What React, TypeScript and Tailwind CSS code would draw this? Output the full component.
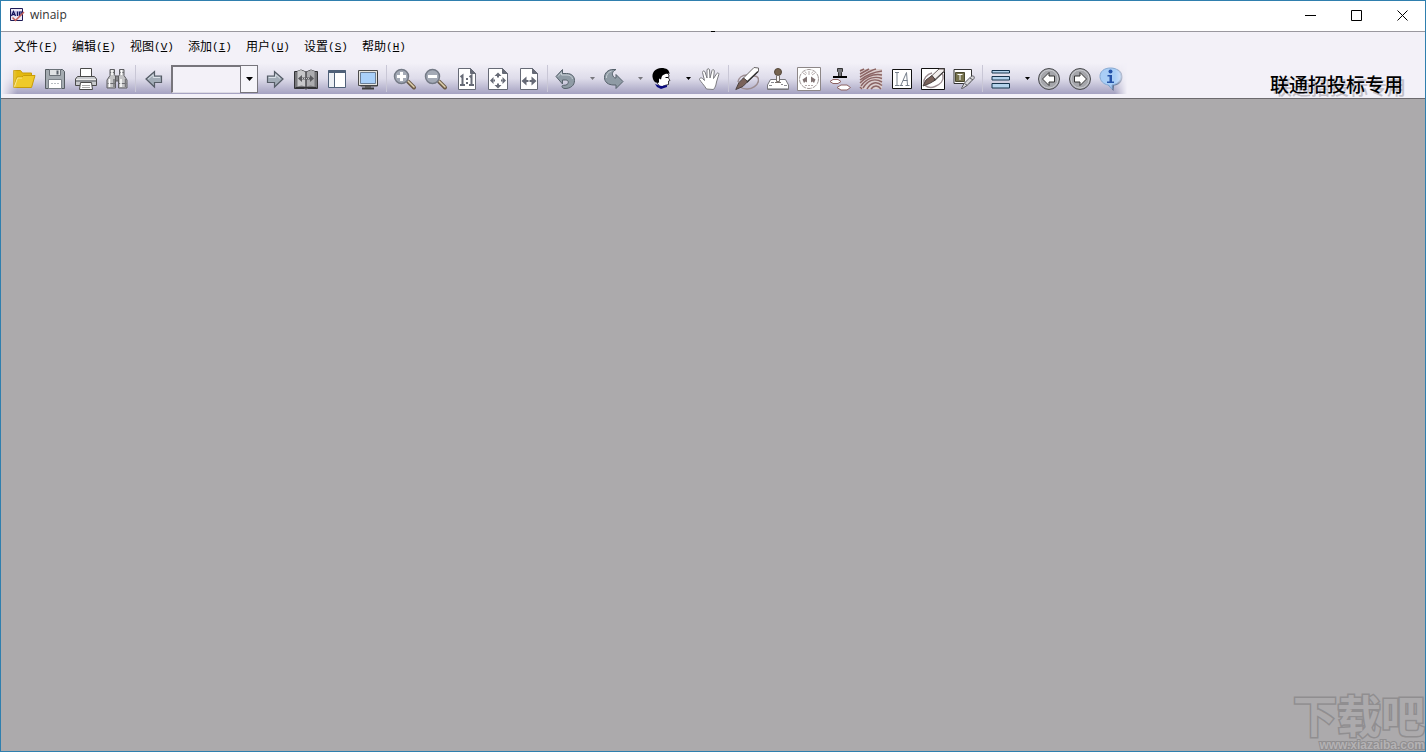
import React from 'react';

interface IconProps {
  children: React.ReactNode;
}

const Icon: React.FC<IconProps> = ({ children }) => (
  <svg className="w-6 h-6" viewBox="0 0 24 24" fill="none">
    {children}
  </svg>
);

const OpenIcon = () => (
  <Icon>
    <path d="M1.5 20V3.5h7l2 2.5h9v4" fill="#e3b90f" stroke="#c89c0a" />
    <path d="M1.5 20.5L5 10h5l1.5-1.5H23L19.5 20.5z" fill="#efca2b" stroke="#c89c0a" />
    <path d="M2.500 19.500L5.500 11H10" stroke="#fbe98a" />
  </Icon>
);

const SaveIcon = () => (
  <Icon>
    <path d="M2.5 2.5h17l2 2v17h-19z" fill="#a4abb1" stroke="#555c62" />
    <path d="M6.5 2.5h11v6h-11z" fill="#dfe2e4" stroke="#6a7178" />
    <path d="M13.5 3.5h2v4h-2z" fill="#59616a" />
    <path d="M5.5 12.5h13v9h-13z" fill="#fff" stroke="#7a8188" />
    <path d="M8 16.5h8" stroke="#b9bec3" strokeDasharray="2 1" />
  </Icon>
);

const PrintIcon = () => (
  <Icon>
    <path d="M6.5 10V1.5h11V10" fill="#fff" stroke="#4a4a4a" />
    <path d="M3.5 9.5h17l2 2.5v6.5h-21V12z" fill="#c9cbce" stroke="#4a4a4a" />
    <path d="M2 12h20v3H2z" fill="#8c8f93" />
    <path d="M2 12.5h20" stroke="#eee" />
    <path d="M6.5 15.5h11l1 7h-13z" fill="#fff" stroke="#4a4a4a" />
    <path d="M8 18.5h8M8 20.5h8" stroke="#aaa" />
  </Icon>
);

const FindIcon = () => (
  <Icon>
    <path d="M5 2.5h4.500v5l1 2v11.500H2v-8l3-4.500z" fill="#c4c4c6" stroke="#5c5c60" />
    <path d="M14.500 2.500H19v6l3 4.500v8h-8.500V9.500l1-2z" fill="#c4c4c6" stroke="#5c5c60" />
    <path d="M10.500 9h3v5h-3z" fill="#8a8a8e" stroke="#5c5c60" />
    <path d="M5 5.500h4.500M14.500 5.500H19M2.500 16.500h8M13.500 16.500h8" stroke="#6c6c70" />
    <path d="M4.500 12v8M16 12v8M7 3v5M16.500 3v5" stroke="#fff" strokeWidth="1.500" />
    <path d="M9 12v8M20.500 12v8" stroke="#77777b" strokeWidth="1.500" />
  </Icon>
);

const PrevIcon = () => (
  <Icon>
    <path d="M4 12l8.500-7.500V9h7v6.500h-7V20z" fill="#a3adb8" stroke="#555c66" strokeWidth="1.200" />
    <path d="M6.200 12l5-4.300v2.800h6.800" stroke="#dce2e8" />
  </Icon>
);

const NextIcon = () => (
  <Icon>
    <path d="M20 12l-8.500-7.500V9h-7v6.500h7V20z" fill="#a3adb8" stroke="#555c66" strokeWidth="1.200" />
    <path d="M5.700 10.500h7v-3l4.500 4" stroke="#dce2e8" />
  </Icon>
);

const BookIcon = () => (
  <Icon>
    <path d="M.5 4.500H3l4-1.500 5 2 5-2 4 1.500h2.500v17h-10L12 22l-1.500-.5H.5z" fill="#77777a" stroke="#333336" />
    <path d="M3.500 4L7 3l4.500 2v14.500l-4-1-4 1z" fill="#c8c8ca" />
    <path d="M20.500 4L17 3l-4.500 2v14.500l4-1 4 1z" fill="#acacaf" />
    <path d="M12 5v15M1.500 20.500h21" stroke="#333336" />
    <path d="M4 11.500L8 8v2.500h8V8l4 3.500-4 3.500v-2.500H8V15z" fill="#5a5a5e" />
    <path d="M8 11.500h8" stroke="#c4c4c6" strokeDasharray="1 1" />
  </Icon>
);

const SidebarIcon = () => (
  <Icon>
    <path d="M3.500 3.500h17v17h-17z" fill="#fff" stroke="#4f6078" />
    <path d="M3.500 4.500h17" stroke="#4f6078" strokeWidth="3" />
    <path d="M9.500 4v16" stroke="#4f6078" />
    <path d="M4 6h5v14H4z" fill="#eceff4" />
  </Icon>
);

const ScreenIcon = () => (
  <Icon>
    <path d="M2.500 3.500h19v15h-19z" fill="#e5e4df" stroke="#4c4c4c" />
    <path d="M4.500 5.500h15v11h-15z" fill="#a9d0fa" stroke="#6b7f98" />
    <path d="M9 19h6v2H9z" fill="#777" />
    <path d="M6 21.500h12" stroke="#3c3c3c" strokeWidth="2" />
    <path d="M21.500 5v14h-17" stroke="#3c3c3c" />
  </Icon>
);

const ZoomLens: React.FC<{ plus?: boolean }> = ({ plus }) => (
  <Icon>
    <path d="M15 14.500l6 6" stroke="#6b5a48" strokeWidth="4" strokeLinecap="round" />
    <path d="M15 14l6 6" stroke="#e0d2ae" strokeWidth="1.500" strokeLinecap="round" />
    <circle cx="8.500" cy="9.500" r="7" fill="#a4aab6" stroke="#747a86" strokeWidth="1.500" />
    <path d="M4 9.500h9" stroke="#fff" strokeWidth="3" />
    {plus && <path d="M8.500 5v9" stroke="#fff" strokeWidth="3" />}
  </Icon>
);

const Sheet = () => (
  <>
    <path d="M2.500 1.500h14l5 5v16h-19z" fill="#fff" stroke="#666a76" />
    <path d="M16.500 1.500v5h5z" fill="#666a76" stroke="#666a76" />
  </>
);

const ActualSizeIcon = () => (
  <Icon>
    <path d="M3.500 1.500h12l5 5v16h-17z" fill="#fff" stroke="#666a76" />
    <path d="M15.500 1.500v5h5z" fill="#666a76" stroke="#666a76" />
    <path d="M5.500 10l2-1.500v9M5 18h5M14.500 10l2-1.500v9M14 18h5" stroke="#666a76" strokeWidth="2" />
    <path d="M11 11h2v2h-2zM11 15h2v2h-2z" fill="#666a76" />
  </Icon>
);

const FitPageIcon = () => (
  <Icon>
    <Sheet />
    <path
      d="M12 5.500L15.500 9h-7zM12 21.500L15.500 18h-7zM4 13.500L7.500 10v7zM20 13.500L16.500 10v7z"
      fill="#666a76"
    />
    <path d="M11 9h2v1.500h-2zM11 16.500h2V18h-2zM7.500 12.500H9v2H7.500zM15 12.500h1.500v2H15z" fill="#666a76" />
  </Icon>
);

const FitWidthIcon = () => (
  <Icon>
    <path d="M3.500 1.500h12l5 5v16h-17z" fill="#fff" stroke="#666a76" />
    <path d="M15.500 1.500v5h5z" fill="#666a76" stroke="#666a76" />
    <path d="M4.500 14L9.500 9.500V13h5V9.500l5 4.500-5 4.500V15h-5v3.500z" fill="#666a76" />
    <path d="M11.500 12.500h1v3h-1z" fill="#fff" />
  </Icon>
);

const UndoIcon = () => (
  <Icon>
    <path
      d="M2 9.500L8.500 2.500v4h4c5.500 0 8 3 8 7 0 5-4 8-9.500 8-1.500 0-3-.8-3-2 0-.8.5-1.200 1.500-1.200 3 0 4.800-1 4.800-3 0-1.500-1-2.300-3-2.300H8.500v4z"
      fill="#8f9ba5"
      stroke="#56616b"
    />
    <path d="M4 9.500l3.500-4v2.500H13c3 0 5 1.500 5.500 4" stroke="#c6ced4" />
  </Icon>
);

const RedoIcon = () => (
  <Icon>
    <path
      d="M21 14.500L14 21.500V18h-2C6 18 2.500 15 2.500 10.500S6 2.500 11 2.500h3c-3 1.500-4.500 4-3 6.500.8 1.500 1.500 2 3 2V7.500z"
      fill="#8f9ba5"
      stroke="#56616b"
    />
    <path d="M9.500 4.200C6 5 4.200 8 4.500 11" stroke="#c6ced4" />
  </Icon>
);

const UserIcon = () => (
  <Icon>
    <path d="M8 9l9-3 2 2-.5 3 1.500 2.500-1.500.5v3.500l-4 1-4 2-3-4z" fill="#fff" stroke="#111" strokeWidth=".8" />
    <path d="M3 12c-2-6 2-11 8.500-11 5 0 8 2 8 6-3-1-5 0-6.500 1-1.500 1-1.500 3-2 4.500l-2-1v4c-3 1-5-.5-6-3.500z" fill="#000" />
    <path d="M5 17l4 1.500 3 .5 5-1v2l-3 1-3 1-4-2z" fill="#0a0a80" />
    <path d="M15.500 10.500H18" stroke="#000" />
  </Icon>
);

const HandIcon = () => (
  <Icon>
    <path
      d="M8.500 22C6 18 3 15 1.500 12.500c0-2 2-2 3-1l2 2L4.500 5.500c0-2 2-2 2.500-.5l2 6V3c.3-1.800 2.200-1.800 2.500 0l.5 8 2-7.500c.5-1.500 2.300-1 2.300.5L15.500 11.500l3.300-5c1-1.200 2.500-.3 2 1L18.500 15c-.5 3-1 5-3 7.500z"
      fill="#fff"
      stroke="#7b7b80"
    />
  </Icon>
);

const PenIcon = () => (
  <Icon>
    <path d="M16 9.500c5-1.500 8 .5 7.500 4.500-.8 4-6 8.500-12 8-3 0-5-1-6.500-2" stroke="#9c8d91" strokeWidth="1.500" />
    <path d="M12 8C7 8 3.500 11 3 15" stroke="#9c8d91" strokeWidth="1.500" />
    <path d="M19 .5l-11 11 4 4L23.500 4.500V1z" fill="#fff" stroke="#6a6667" />
    <path d="M8.500 11L4 15.500.8 22.500l7-3 5-5z" fill="#7a625a" stroke="#49403e" />
    <path d="M23 4.500L12 15" stroke="#333" strokeWidth="1.500" />
  </Icon>
);

const StampIcon = () => (
  <Icon>
    <circle cx="12" cy="5" r="3.500" fill="#75634f" stroke="#55483c" />
    <path d="M4.500 12.500h15l3 5.500v4.500h-21V18z" fill="#fff" stroke="#77777c" />
    <path d="M10.500 8.500h3v6h-3z" fill="#f4f2f2" stroke="#77706c" />
    <path d="M9 15.500h6" stroke="#77706c" />
    <path d="M5 15.500h3M3 18.500h3M18 18.500h3M15 17.500h2" stroke="#8a8a90" />
    <path d="M2 21.500h20" stroke="#aeaeb4" />
  </Icon>
);

const SealIcon = () => (
  <Icon>
    <path d="M.5.5h23v23H.5z" fill="#fff" stroke="#8d8787" />
    <circle cx="12" cy="12" r="9.500" stroke="#a09797" strokeDasharray="5 1" />
    <path d="M12 4v4M6 6l3 2M18 6l-3 2M8 4.500l1.500 2M16 4.500l-1.500 2" stroke="#b5abab" />
    <path d="M5.500 12.500L10 9.500v6l-1.500-1L7 16zM18.500 12.500L14 9.500v6l1.500-1L17 16z" fill="#807272" />
    <path d="M8 18.500h8" stroke="#b5abab" strokeDasharray="2 1" />
  </Icon>
);

const MultiStampIcon = () => (
  <Icon>
    <path d="M9.500 1.500h5v3l-1 1v4h-3v-4l-1-1z" fill="#77777c" stroke="#333" />
    <path d="M5 10h14" stroke="#000" strokeWidth="2" />
    <path d="M2 14.500l3-2h5l3 2-3 2H5zM9 20.500l4-2.500h6l3.500 2.500L19 23h-6z" fill="#fff" stroke="#8e6464" />
  </Icon>
);

const FingerprintIcon = () => (
  <Icon>
    <path d="M1 2h22v20H1z" fill="#dccfcf" />
    <path
      d="M1 4l4-2M1 7l9-5M1 10C8 6 12 3 17 2M1 13C9 7 15 5 23 4M1 16C8 9 15 6.500 23 8M2 19C8 11 16 9 23 11.500M4 21c5-8 12-10 19-6M8 22c4-7 10-8 15-3.500M12 22c3-4 7-4 10 0M1 20l2 2"
      stroke="#8b6464"
      strokeWidth="1.500"
    />
  </Icon>
);

const TextFieldIcon = () => (
  <Icon>
    <path d="M2.500 2.500h19v19h-19z" fill="#fff" stroke="#111" />
    <path d="M5 5.500h4M7 5.500v13M5 18.500h4M9.500 18.500H13M15.500 18.500h4M11 18l5.500-12.500M16.500 5.500l1 12.500M13 13.500h4.500" stroke="#77808c" />
  </Icon>
);

const SignatureIcon = () => (
  <Icon>
    <path d="M.5 1.500h23v21H.5z" fill="#fff" stroke="#111" />
    <path d="M11 6C6 7 2 12 3 16s6 5.500 11 3.500 9-6 8-11c-.5-2-2-3-4-2.500" stroke="#9c8d91" strokeWidth="1.500" />
    <path d="M18 2l-7.500 7 4 4L23 5V2z" fill="#f3efee" stroke="#6a6060" />
    <path d="M11 8.500l-6 4.500L2 19l6.500-2.500 6-3.500z" fill="#7a625a" stroke="#49403e" />
    <path d="M22.500 4.500L13 13.500" stroke="#333" />
  </Icon>
);

const NoteIcon = () => (
  <Icon>
    <path d="M2 2.500h17.500V13L17 16.500H2z" fill="#fff" stroke="#333" />
    <path d="M3.500 5.500h9v9h-9z" fill="#77734d" stroke="#4b4930" />
    <path d="M5.500 7.500h5M8 7.500V13" stroke="#fff" />
    <path d="M9.500 21.500l2.500-5 7-7c2-1.500 4 0 3 2l-7 7-4.500 3z" fill="#d7d7da" stroke="#5a5a60" />
    <path d="M12.500 16.500l3 2M18 11l3 2" stroke="#5a5a60" />
  </Icon>
);

const LinesIcon = () => (
  <Icon>
    <path d="M3 3.500h17.500V6H3zM3 9.500h17.500V13H3zM3 16.500h17.500V21H3z" fill="#b5d3ec" stroke="#17344c" />
  </Icon>
);

const CircleArrowIcon: React.FC<{ right?: boolean }> = ({ right }) => (
  <Icon>
    <circle cx="12" cy="12" r="10.500" fill="#a5a6ab" stroke="#4b4c50" />
    <circle cx="12" cy="12" r="9" stroke="#c9cacf" />
    {right ? (
      <path d="M18.500 12L12 5.500V9H6.500v6H12v3.500z" fill="#fff" stroke="#333" />
    ) : (
      <path d="M5.500 12L12 5.500V9h5.500v6H12v3.500z" fill="#fff" stroke="#333" />
    )}
  </Icon>
);

const InfoIcon = () => (
  <Icon>
    <path d="M13 1.500c7 0 10.500 3.500 10.500 8.500s-3.500 8-8.500 8.500L14.500 24 9 18z" fill="#5c6f90" />
    <path d="M11.500 1C5 1 1 4.500 1 9.500c0 4 3.500 8 8.500 8.500l3.500 4v-4c5-.5 9-4 9-8.500C22 4.500 18 1 11.500 1z" fill="#a9cef6" stroke="#86a9d2" />
    <circle cx="11.500" cy="4.500" r="2" fill="#2452a8" />
    <path d="M8.500 8H13v6.500h2V16H8v-1.500h2.500v-5h-2z" fill="#2452a8" />
  </Icon>
);

const AppIcon = () => (
  <svg className="w-4 h-4" viewBox="0 0 16 16" fill="none">
    <path d="M1.500 1.500h12v12h-12z" fill="#eeeaf8" stroke="#1d1a55" />
    <path d="M2 4h11v5H2z" fill="#c6c3e8" />
    <path d="M2.500 9l2-4.500L6.500 9M3.500 7.500h2M8.500 4.500V9M10.500 9V5H13v2h-2" stroke="#17155c" strokeWidth="1.200" />
    <path d="M3.500 10.500l3 3L15 5" stroke="#c5605a" strokeWidth="1.500" />
  </svg>
);

const ToolButton: React.FC<{ label: string; children: React.ReactNode }> = ({ label, children }) => (
  <button aria-label={label} title={label} className="w-[31px] h-[30px] shrink-0 flex items-center justify-center">
    {children}
  </button>
);

const Separator = () => (
  <div className="w-1.5 shrink-0 flex justify-center self-stretch py-0.5">
    <div className="w-px bg-[#c9c7d6]"></div>
  </div>
);

const DropArrow: React.FC<{ label: string; active?: boolean }> = ({ label, active }) => (
  <button aria-label={label} className="w-[17px] h-[30px] pl-1.5 shrink-0 flex items-center justify-center">
    <svg className={`w-[5px] h-[3px] ${active ? 'text-black' : 'text-[#77777d]'}`} viewBox="0 0 5 3" fill="currentColor">
      <path d="M0 0h5L2.500 3z" />
    </svg>
  </button>
);

const menus = [
  { name: '文件', hotkey: 'F' },
  { name: '编辑', hotkey: 'E' },
  { name: '视图', hotkey: 'V' },
  { name: '添加', hotkey: 'I' },
  { name: '用户', hotkey: 'U' },
  { name: '设置', hotkey: 'S' },
  { name: '帮助', hotkey: 'H' },
];

const TitleBar = () => (
  <header className="h-[30px] pb-0.5 bg-white flex items-center justify-between pl-2">
    <div className="flex items-center gap-[5px]">
      <AppIcon />
      <h1 className="text-xs text-[#333] font-['Open_Sans','Noto_Sans',sans-serif]">winaip</h1>
    </div>
    <div className="flex h-full">
      <button aria-label="最小化" className="w-[46px] flex items-center justify-center">
        <svg className="w-[11px] h-[11px]" viewBox="0 0 11 11" stroke="#000">
          <path d="M0 5.500h11" />
        </svg>
      </button>
      <button aria-label="最大化" className="w-[46px] flex items-center justify-center">
        <svg className="w-[11px] h-[11px]" viewBox="0 0 11 11" fill="none" stroke="#000">
          <path d="M.5.5h10v10H.5z" />
        </svg>
      </button>
      <button aria-label="关闭" className="w-[46px] flex items-center justify-center">
        <svg className="w-[11px] h-[11px]" viewBox="0 0 11 11" stroke="#000">
          <path d="M.5.5l10 10M10.500.5l-10 10" />
        </svg>
      </button>
    </div>
  </header>
);

const MenuBar = () => (
  <nav className="h-[31px] pb-px pl-1.5 flex items-center">
    {menus.map((menu) => (
      <button key={menu.name} className="w-[58px] h-6 flex items-center justify-center text-xs text-black whitespace-nowrap">
        {menu.name}
        <span className="text-[11px] font-['Liberation_Mono',monospace]">
          (<span className="underline">{menu.hotkey}</span>)
        </span>
      </button>
    ))}
  </nav>
);

const PageBox = () => (
  <div className="w-[87px] h-7 ml-0.5 mr-px shrink-0 flex">
    <input
      type="text"
      aria-label="页码"
      className="w-[69px] h-full px-1 text-xs bg-[#f3f1f8] border-t-2 border-l-2 border-b border-[#77757c] border-b-[#dddbe4] outline-none"
    />
    <button aria-label="选择页码" className="w-[18px] h-full flex items-center justify-center bg-[#f6f5fa] border border-[#77757c]">
      <svg className="w-[7px] h-1" viewBox="0 0 7 4">
        <path d="M0 0h7L3.500 4z" />
      </svg>
    </button>
  </div>
);

const Toolbar = () => (
  <div className="h-[31px] pl-[7px] pr-px flex items-center shrink-0 bg-linear-to-b from-[#f3f1f8] via-[#dedcea] to-[#a5a2c1] [mask-image:linear-gradient(to_right,transparent,black_16px,black_calc(100%-12px),transparent)]">
    <ToolButton label="打开"><OpenIcon /></ToolButton>
    <ToolButton label="保存"><SaveIcon /></ToolButton>
    <ToolButton label="打印"><PrintIcon /></ToolButton>
    <ToolButton label="查找"><FindIcon /></ToolButton>
    <Separator />
    <ToolButton label="上一页"><PrevIcon /></ToolButton>
    <PageBox />
    <ToolButton label="下一页"><NextIcon /></ToolButton>
    <ToolButton label="双页"><BookIcon /></ToolButton>
    <ToolButton label="侧栏"><SidebarIcon /></ToolButton>
    <ToolButton label="全屏"><ScreenIcon /></ToolButton>
    <Separator />
    <ToolButton label="放大"><ZoomLens plus /></ToolButton>
    <ToolButton label="缩小"><ZoomLens /></ToolButton>
    <ToolButton label="实际大小"><ActualSizeIcon /></ToolButton>
    <ToolButton label="适合页面"><FitPageIcon /></ToolButton>
    <ToolButton label="适合宽度"><FitWidthIcon /></ToolButton>
    <Separator />
    <ToolButton label="撤销"><UndoIcon /></ToolButton>
    <DropArrow label="撤销列表" />
    <ToolButton label="重做"><RedoIcon /></ToolButton>
    <DropArrow label="重做列表" />
    <ToolButton label="用户"><UserIcon /></ToolButton>
    <DropArrow label="用户列表" active />
    <ToolButton label="浏览"><HandIcon /></ToolButton>
    <Separator />
    <ToolButton label="手写"><PenIcon /></ToolButton>
    <ToolButton label="盖章"><StampIcon /></ToolButton>
    <ToolButton label="印章"><SealIcon /></ToolButton>
    <ToolButton label="批量盖章"><MultiStampIcon /></ToolButton>
    <ToolButton label="指纹"><FingerprintIcon /></ToolButton>
    <ToolButton label="文字"><TextFieldIcon /></ToolButton>
    <ToolButton label="签名"><SignatureIcon /></ToolButton>
    <ToolButton label="批注"><NoteIcon /></ToolButton>
    <Separator />
    <ToolButton label="线宽"><LinesIcon /></ToolButton>
    <DropArrow label="线宽列表" active />
    <ToolButton label="后退"><CircleArrowIcon /></ToolButton>
    <ToolButton label="前进"><CircleArrowIcon right /></ToolButton>
    <ToolButton label="关于"><InfoIcon /></ToolButton>
  </div>
);

export default function App() {
  return (
    <div className="min-h-screen relative flex flex-col overflow-hidden border border-[#2f7fae] bg-[#acaaac] font-['Liberation_Sans','Noto_Sans_CJK_SC',sans-serif]">
      <TitleBar />
      <div className="h-px bg-[#9a989f] flex justify-center">
        <div className="w-1 bg-black"></div>
      </div>

      <div className="h-[67px] bg-[#f3f1f8] border-b border-[#6c6a6e] flex justify-between">
        <div className="shrink-0">
          <MenuBar />
          <Toolbar />
        </div>
        <div className="self-end pr-[22px] whitespace-nowrap text-[19px] leading-6 font-medium text-black [text-shadow:3px_3px_0_#c2c0c8]">
          联通招投标专用
        </div>
      </div>

      <main className="flex-1"></main>

      {/* Site watermark over the workspace */}
      <div className="absolute right-0 bottom-0 flex flex-col items-end pointer-events-none whitespace-nowrap">
        <div className="text-[44px] leading-[44px] font-bold text-[#acaaac] [-webkit-text-stroke:3px_#908e90] [paint-order:stroke_fill]">下载吧</div>
        <div className="text-xs leading-[11px] font-bold text-[#b4b2b4] [-webkit-text-stroke:2px_#908e90] [paint-order:stroke_fill]">www.xiazaiba.com</div>
      </div>
    </div>
  );
}
